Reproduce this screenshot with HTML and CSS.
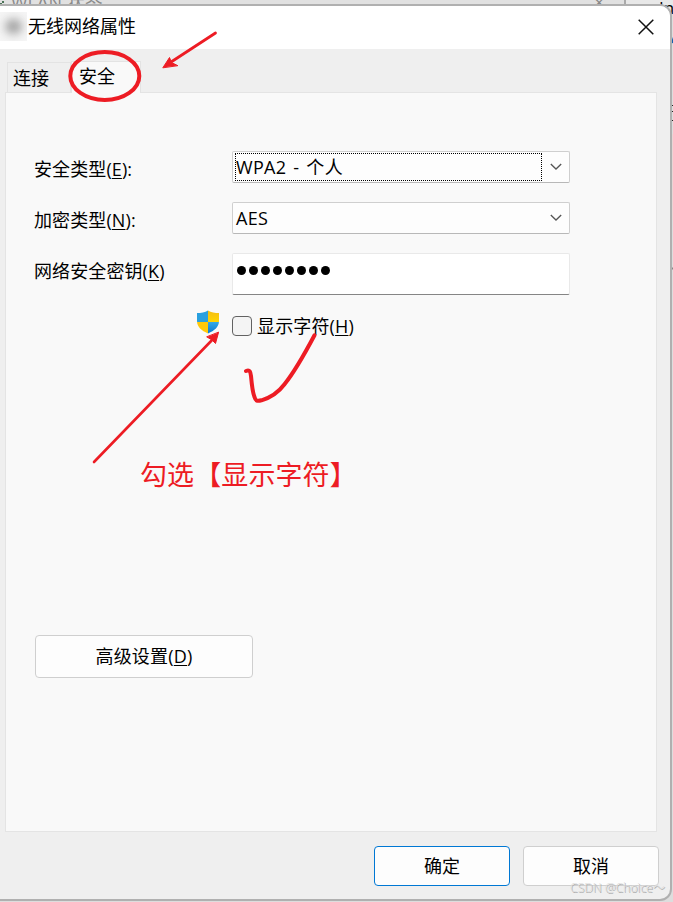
FILE: index.html
```
<!DOCTYPE html>
<html lang="zh-CN">
<head>
<meta charset="utf-8">
<title>无线网络属性</title>
<link rel="stylesheet" href="styles.css">
</head>
<body>
<div class="desktop">
  <div class="backdrop" aria-hidden="true">
    <span class="back-title">WLAN 状态</span>
    <span class="back-close">×</span>
    <span class="back-text">In</span>
    <svg class="back-marks" width="673" height="902" viewBox="0 0 673 902">
      <path d="M0 4h2M2 2h2" stroke="#4b7357" stroke-width="2"/>
      <path d="M670 34l3 9" stroke="#1261b0" stroke-width="2"/>
      <path d="M671 105.500h2M671 111.500h2M671 120.500h2" stroke="#222"/>
      <path d="M672.500 134v86" stroke="#e9d5d5"/>
      <path d="M670 268.500h3" stroke="#888" stroke-width="2"/>
    </svg>
  </div>
  <main class="dialog">
    <header class="titlebar">
      <span class="blurred"><i></i></span>
      <h1>无线网络属性</h1>
      <svg class="close" width="16" height="16" viewBox="0 0 16 16"><path d="M.7.7l14.600 14.600M15.300.7L.7 15.300"/></svg>
    </header>
    <nav class="tabs">
      <span class="tab">连接</span>
      <span class="tab active">安全</span>
    </nav>
    <section class="panel">
      <div class="form">
        <label>安全类型(<u>E</u>):</label>
        <div class="select focused"><span>WPA2 - 个人</span><svg width="12" height="8" viewBox="0 0 12 8"><path d="M.8 1l5.200 5 5.200-5"/></svg></div>
        <label>加密类型(<u>N</u>):</label>
        <div class="select"><span>AES</span><svg width="12" height="8" viewBox="0 0 12 8"><path d="M.8 1l5.200 5 5.200-5"/></svg></div>
        <label class="key-label">网络安全密钥(<u>K</u>)</label>
        <div class="password"><i></i><i></i><i></i><i></i><i></i><i></i><i></i><i></i></div>
      </div>
      <div class="reveal">
        <svg class="shield" width="24" height="24" viewBox="0 0 24 24">
          <defs>
            <clipPath id="shield"><path d="M12 .5C9 2.700 5 3 1 3v8c0 6 4.500 9.500 11 12.500C18.500 20.500 23 17 23 11V3C19 3 15 2.700 12 .5z"/></clipPath>
            <linearGradient id="blue" x2="0" y2="1"><stop stop-color="#35a9e7"/><stop offset="1" stop-color="#0875cd"/></linearGradient>
            <linearGradient id="gold" x2="0" y2="1"><stop stop-color="#f4bc16"/><stop offset="1" stop-color="#ffd500"/></linearGradient>
          </defs>
          <g clip-path="url(#shield)">
            <path d="M0 0h12v12H0z" fill="#29a0df"/><path d="M12 0h12v12H12z" fill="url(#gold)"/>
            <path d="M0 12h12v12H0z" fill="#ffc90b"/><path d="M12 12h12v12H12z" fill="url(#blue)"/>
          </g>
        </svg>
        <span class="checkbox"></span>
        <label>显示字符(<u>H</u>)</label>
      </div>
      <p class="note">勾选【显示字符】</p>
      <button class="advanced">高级设置(<u>D</u>)</button>
    </section>
    <footer class="actions">
      <button class="primary">确定</button>
      <button>取消</button>
    </footer>
  </main>
  <svg class="annotations" width="673" height="902" viewBox="0 0 673 902">
    <ellipse cx="104.800" cy="76" rx="34.500" ry="24" stroke-width="4"/>
    <path d="M215.500 33L168 64" stroke-width="2.800"/>
    <path class="head" d="M163 67.500l6.500-10 2 5 6 3z"/>
    <path d="M94 462L214 338" stroke-width="2.600"/>
    <path class="head" d="M218.500 332.500l-3 11-3.500-3.500-5-3z"/>
    <path d="M246 371c4-1.500 4.500 1 5 5 .7 8 1.500 16 3.500 21 1 3.500 2 4.500 7 3.300 8-2.300 17-8 23-16 12-15 21-32 30-49" stroke-width="4"/>
  </svg>
  <span class="watermark">CSDN @Choice～</span>
</div>
</body>
</html>
```
FILE: styles.css
```
* { box-sizing: border-box; }

body {
  margin: 0;
  color: #000;
  font: 18px/24px "Open Sans", "Noto Sans CJK SC", sans-serif;
}

.desktop {
  position: relative;
  width: 673px;
  height: 902px;
  padding-top: 6px;
  overflow: hidden;
  background: #c9c9c9;
}

.backdrop {
  position: absolute;
  inset: 0;
  background: linear-gradient(90deg, #e1e1e1 624px, #aaa 624px, #aaa 626px, #e8e8e8 626px) top / 100% 10px no-repeat, #ddd;
}

.back-title, .back-close, .back-text, .back-marks { position: absolute; }
.back-title { left: 11px; top: -10px; color: #8b8b8b; line-height: 24px; }
.back-close { left: 594px; top: -10px; color: #858585; }
.back-text { left: 659px; top: -4px; font-size: 17px; }
.back-marks { left: 0; top: 0; }

.dialog {
  position: relative;
  display: flex;
  flex-direction: column;
  width: 670px;
  height: 893px;
  overflow: hidden;
  background: #efefef;
  border-radius: 0 10px 10px 0;
  box-shadow: 0 0 0 2px #b0b0b0;
}

.titlebar {
  display: flex;
  align-items: center;
  flex: none;
  height: 43px;
  padding-right: 16px;
  background: #fff;
}

.blurred {
  display: flex;
  align-items: center;
  justify-content: center;
  width: 27px;
  height: 29px;
  margin-top: -2px;
  overflow: hidden;
  background: #f5f5f5;
}

.blurred i {
  width: 17px;
  height: 15px;
  background: #a0a0a0;
  border-radius: 50%;
  filter: blur(5px);
}

h1 { flex: 1; margin: 0 0 3px 1px; font-size: 18px; font-weight: 400; }

.close { margin-bottom: 2px; fill: none; stroke: #111; stroke-width: 1.500; }

.tabs {
  display: flex;
  align-items: flex-end;
  flex: none;
  height: 43px;
  padding-left: 7px;
}

.tab {
  width: 64px;
  height: 30px;
  padding: 3px 5px;
  border: 1px solid #e3e3e3;
  border-bottom: 0;
}

.tab.active {
  position: relative;
  width: 70px;
  height: 32px;
  margin-bottom: -1px;
  padding: 2px 7px;
  background: #f9f9f9;
  z-index: 1;
}

.panel {
  flex: none;
  width: 652px;
  height: 740px;
  margin-left: 5px;
  padding: 58px 0 0 28px;
  background: #f9f9f9;
  border: 1px solid #e4e4e4;
}

.form {
  display: grid;
  grid-template-columns: 198px 338px;
  grid-template-rows: 32px 32px 42px;
  row-gap: 19px;
  align-items: center;
}

.form label { padding-top: 3px; letter-spacing: .1px; }
.form .key-label { align-self: start; padding-top: 6px; }

u { text-decoration-thickness: 1px; text-underline-offset: 2px; }

.select {
  display: flex;
  align-items: center;
  justify-content: space-between;
  width: 338px;
  height: 32px;
  padding: 0 7px 0 2px;
  background: #fdfdfd;
  border: 1px solid #cfcfcf;
  border-bottom-color: #b8b8b8;
  border-radius: 2px;
}

.select span { width: 307px; height: 28px; padding: 1px 0; border: 1px solid transparent; letter-spacing: .3px; word-spacing: 2px; }
.select.focused span { border: 1px dotted #000; }
.select svg { fill: none; stroke: #555; stroke-width: 1.300; }

.password {
  display: flex;
  gap: 3px;
  width: 338px;
  height: 42px;
  padding: 12px 4px;
  background: #fff;
  border: 1px solid #e9e9e9;
  border-bottom-color: #858585;
  border-radius: 2px;
}

.password i { width: 9px; height: 9px; background: #000; border-radius: 50%; }

.reveal { display: flex; margin: 15px 0 0 162px; }
.shield { margin-right: 12px; }
.checkbox {
  width: 20px;
  height: 20px;
  margin: 6px 5px 0 0;
  background: #f4f4f4;
  border: 1px solid #626262;
  border-radius: 4px;
}
.reveal label { margin-top: 4px; letter-spacing: .15px; }

.note { margin: 117px 0 0 106px; color: #ed1c24; font-size: 27px; line-height: 40px; letter-spacing: .1px; }

button {
  padding: 0;
  color: #000;
  font: inherit;
  background: #fdfdfd;
  border: 1px solid #cfcfcf;
  border-radius: 4px;
}

.advanced { display: block; width: 218px; height: 43px; margin: 140px 0 0 1px; padding-bottom: 1px; letter-spacing: .2px; }

.actions {
  display: flex;
  justify-content: flex-end;
  gap: 13px;
  padding: 14px 11px 0 0;
}

.actions button { width: 136px; height: 40px; }
.actions .primary { border-color: #0078d4; }

.annotations {
  position: absolute;
  z-index: 2;
  left: 0;
  top: 0;
  fill: none;
  stroke: #ed1c24;
  stroke-linecap: round;
  stroke-linejoin: round;
}

.annotations .head { fill: #ed1c24; stroke-width: 1; }

.watermark {
  position: absolute;
  left: 570px;
  top: 877px;
  color: #dcdcdc;
  font-size: 12px;
  font-weight: 300;
  line-height: 22px;
  letter-spacing: .1px;
  text-shadow: 1px 1px #a5a5a5;
  white-space: nowrap;
}
```
